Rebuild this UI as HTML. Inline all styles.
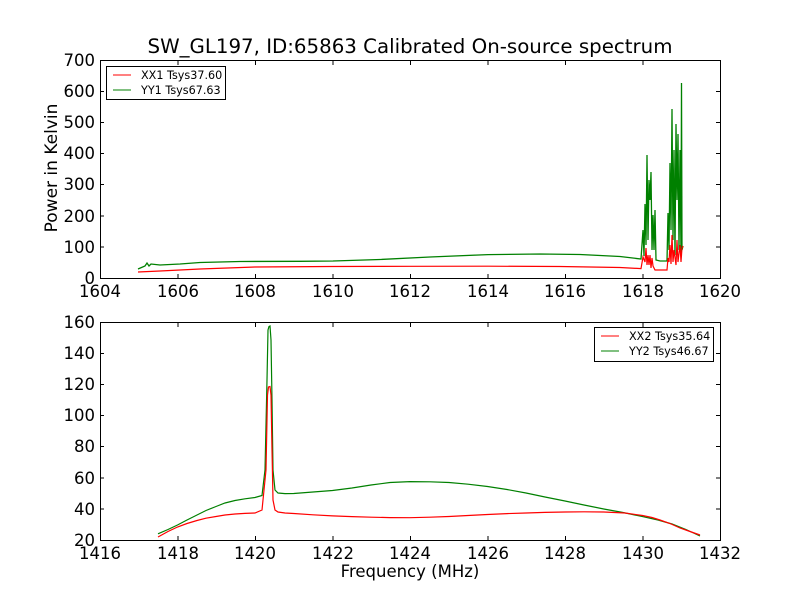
<!DOCTYPE html>
<html><head><style>body{margin:0;background:#fff}svg{display:block}text{font-family:"DejaVu Sans","Liberation Sans",sans-serif;fill:#000}</style></head><body>
<svg width="800" height="600" viewBox="0 0 800 600" xmlns="http://www.w3.org/2000/svg">
<rect width="800" height="600" fill="#fff"/>
<text x="410" y="53" font-size="19.8" text-anchor="middle">SW_GL197, ID:65863 Calibrated On-source spectrum</text>
<g stroke="#000" stroke-width="1" fill="none">
<rect x="100.5" y="60.5" width="620" height="218"/>
<path d="M100.5 278v-4M178 278v-4M255.5 278v-4M333 278v-4M410.5 278v-4M488 278v-4M565.5 278v-4M643 278v-4M720.5 278v-4
M100.5 61v4M178 61v4M255.5 61v4M333 61v4M410.5 61v4M488 61v4M565.5 61v4M643 61v4M720.5 61v4
M100 247h4M100 216h4M100 184.5h4M100 153.5h4M100 122.5h4M100 91.5h4
M720 247h-4M720 216h-4M720 184.5h-4M720 153.5h-4M720 122.5h-4M720 91.5h-4"/>
<rect x="100.5" y="322.5" width="620" height="218"/>
<path d="M100.5 540v-4M178 540v-4M255.5 540v-4M333 540v-4M410.5 540v-4M488 540v-4M565.5 540v-4M643 540v-4M720.5 540v-4
M100.5 323v4M178 323v4M255.5 323v4M333 323v4M410.5 323v4M488 323v4M565.5 323v4M643 323v4M720.5 323v4
M100 509h4M100 478h4M100 446.5h4M100 415.5h4M100 384.5h4M100 353.5h4
M720 509h-4M720 478h-4M720 446.5h-4M720 415.5h-4M720 384.5h-4M720 353.5h-4"/>
</g>
<g font-size="16.5" text-anchor="end">
<text x="95" y="284">0</text><text x="95" y="253">100</text><text x="95" y="222">200</text><text x="95" y="190">300</text><text x="95" y="159">400</text><text x="95" y="128">500</text><text x="95" y="97">600</text><text x="95" y="66">700</text>
<text x="95" y="546">20</text><text x="95" y="515">40</text><text x="95" y="484">60</text><text x="95" y="452">80</text><text x="95" y="421">100</text><text x="95" y="390">120</text><text x="95" y="359">140</text><text x="95" y="328">160</text>
</g>
<g font-size="16.5" text-anchor="middle">
<text x="100" y="297">1604</text><text x="178" y="297">1606</text><text x="255" y="297">1608</text><text x="333" y="297">1610</text><text x="410" y="297">1612</text><text x="488" y="297">1614</text><text x="565" y="297">1616</text><text x="643" y="297">1618</text><text x="720" y="297">1620</text>
<text x="100" y="559">1416</text><text x="178" y="559">1418</text><text x="255" y="559">1420</text><text x="333" y="559">1422</text><text x="410" y="559">1424</text><text x="488" y="559">1426</text><text x="565" y="559">1428</text><text x="643" y="559">1430</text><text x="720" y="559">1432</text>
<text x="410" y="577">Frequency (MHz)</text>
<text transform="translate(57 168) rotate(-90)" font-size="17">Power in Kelvin</text>
</g>
<polyline fill="none" stroke="#008000" stroke-width="1.3" points="138,269 145,266 147,263 149,266 151,264 160,265 180,264 200,262.5 240,261.5 300,261.3 333,261 380,259.5 430,257 488,254.6 540,254 580,254.5 620,256.5 641,259 643,230 644,256 645,204 646,245 647,155 648,240 649,180 650,200 651,172 652,250 653,215 654,250 655,210 656,260 660,261 667,261 668,213 669,250 670,163 671,230 672,109 673,240 674,150 675,255 676,124 677,200 678,134 679,250 680,150 681,255 681.5,83 682,250 683,246"/>
<polyline fill="none" stroke="#ff0000" stroke-width="1.2" points="138,272 160,271 200,269 255,267 330,266.5 410,266.3 488,266.2 560,266.5 620,267.5 641,268.6 643,257 645,262 646,248 647,265 648,255 649,265 650,255 651,268 652,258 653,266 655,270 658,270 667,270 668,258 669,262 670,245 671,264 672,235 673,262 674,250 676,265 677,240 678,262 680,245 681,262 682,248 683,246"/>
<rect x="106.5" y="66.5" width="119" height="33" fill="#fff" stroke="#000"/>
<line x1="113" y1="75" x2="131" y2="75" stroke="#ff0000"/>
<line x1="113" y1="90" x2="131" y2="90" stroke="#008000"/>
<g font-size="11.2"><text x="141" y="79">XX1 Tsys37.60</text><text x="141" y="94">YY1 Tsys67.63</text></g>
<polyline fill="none" stroke="#008000" stroke-width="1.2" points="158,533.8 168,529.5 177.5,525 187,520 197,515 206,510.5 216,506.5 225,503 235,500.5 245,498.8 255,497.5 262,495.5 265,470 267,380 268,330 269,326.5 270,326 271,340 272,400 273,470 275,490 278,493 285,493.6 293.75,493.5 313,492 332.5,490.5 352,488 371,485 390,482.5 410,481.6 430,481.8 449,482.5 468,484.2 487.5,486.5 507,489.5 526,493 545,497 565,501 584,505 603.75,509 623,512.5 642.5,516.6 658,520 672,524 686,529.5 700,536"/>
<polyline fill="none" stroke="#ff0000" stroke-width="1.2" points="158,537 168,531.5 177.5,527 187,523.5 197,520.5 206,518.2 216,516.5 225,515 235,514 245,513.4 255,513 262,510 266,470 267.5,395 268.5,387 270,386.5 271,395 272,450 273,500 275,510 278,512 285,513 293.75,513.5 313,514.8 332.5,515.9 352,516.6 371,517.2 390,517.6 410,517.7 430,517.2 449,516.5 468,515.5 487.5,514.5 507,513.6 526,513 545,512.4 565,512 584,511.8 603.75,512 625,513 642.5,515.5 652,517.5 660,520 670,523.5 680,528 690,531.5 700,535"/>
<rect x="594.5" y="327.5" width="119" height="34" fill="#fff" stroke="#000"/>
<line x1="601" y1="336" x2="619" y2="336" stroke="#ff0000"/>
<line x1="601" y1="351" x2="619" y2="351" stroke="#008000"/>
<g font-size="11.2"><text x="629" y="340">XX2 Tsys35.64</text><text x="629" y="355">YY2 Tsys46.67</text></g>
</svg>
</body></html>
